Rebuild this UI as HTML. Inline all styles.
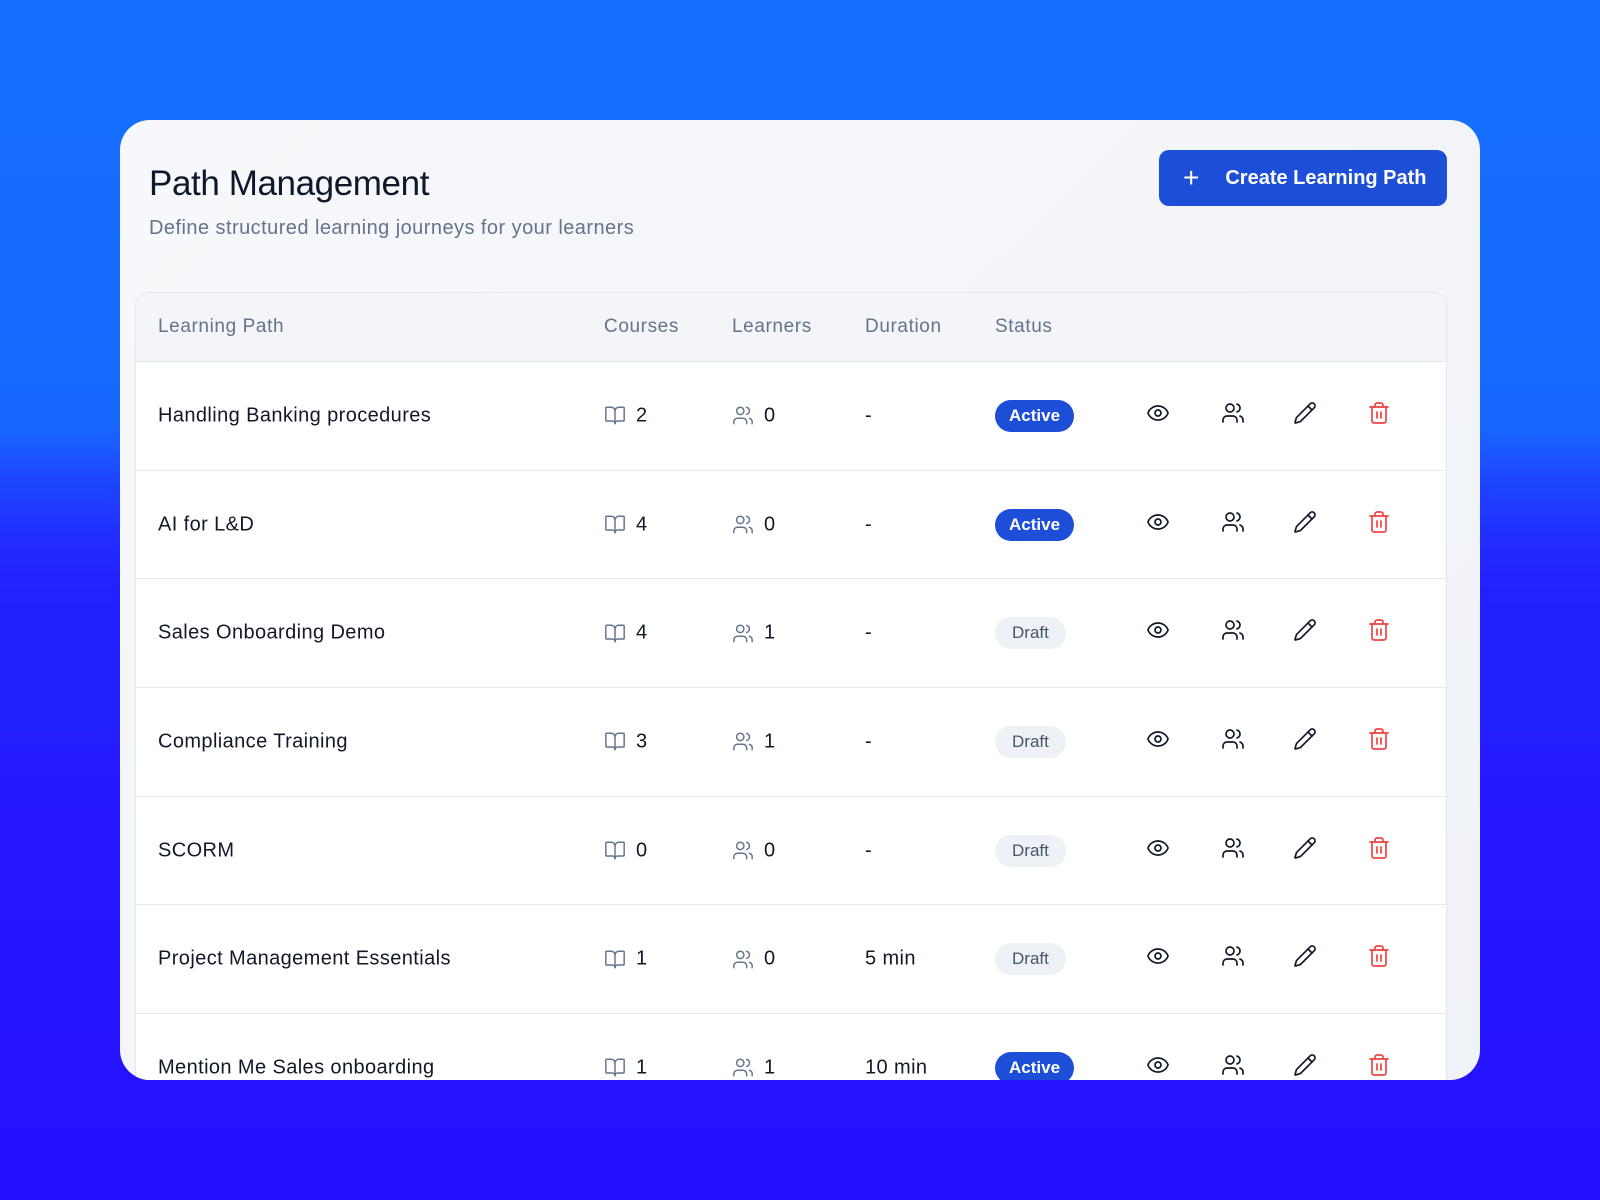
<!DOCTYPE html>
<html><head><meta charset="utf-8"><style>
*{margin:0;padding:0;box-sizing:border-box}
html,body{width:1600px;height:1200px;overflow:hidden}
body{font-family:"Liberation Sans",sans-serif;background:linear-gradient(180deg,#1570ff 0%,#1868ff 35%,#2230ff 50%,#2418ff 65%,#2510ff 100%);position:relative}
.wave{position:absolute;left:0;top:430px;width:1600px;height:300px;background:linear-gradient(180deg,rgba(30,80,255,0) 0%,#2320ff 60%);}
.card{position:absolute;left:120px;top:120px;width:1360px;height:960px;border-radius:30px;background:linear-gradient(135deg,#f7f8fb,#eff2f7);overflow:hidden}
h1{position:absolute;left:29px;top:44px;font-size:35px;font-weight:400;color:#0f172a;letter-spacing:-0.4px}
.sub{position:absolute;left:29px;top:97px;font-size:20px;color:#64748b;letter-spacing:0.45px}
.btn{position:absolute;left:1039px;top:30px;width:288px;height:56px;border-radius:10px;background:#1d4ed8;color:#fff;font-size:20px;font-weight:700;display:flex;align-items:center}
.btn span.p{font-size:28px;font-weight:300;margin-left:24px;margin-right:26px;line-height:1}
.table{position:absolute;left:15px;top:172px;width:1312px;height:900px;border:1px solid #e2e8f0;border-radius:14px;background:#fff;overflow:hidden}
.head{height:69px;background:#f3f5f8;border-bottom:1px solid #e2e8f0;position:relative;font-size:19px;color:#64748b;letter-spacing:0.6px}
.head div,.row>div{position:absolute;top:50%;transform:translateY(-50%)}
.row{height:108.7px;border-bottom:1px solid #e5e9f0;position:relative;font-size:20px;color:#111827;letter-spacing:0.4px}
.c1{left:22px}.c2{left:468px}.c3{left:596px}.c4{left:729px}.c5{left:859px}
.num{display:flex;align-items:center;gap:10px}
.badge{height:32px;border-radius:16px;font-size:17px;line-height:32px;letter-spacing:0}
.act{background:#1d4ed8;color:#fff;font-weight:700;padding:0 14px}
.dr{background:#eef1f5;color:#475569;padding:0 17px}
.ic{width:24px;height:24px;margin-left:-12px}
</style></head><body>
<div class="wave"></div>
<div class="card">
<h1>Path Management</h1>
<div class="sub">Define structured learning journeys for your learners</div>
<div class="btn"><span class="p">+</span>Create Learning Path</div>
<div class="table">
<div class="head"><div class="c1">Learning Path</div><div class="c2">Courses</div><div class="c3">Learners</div><div class="c4">Duration</div><div class="c5">Status</div></div>
</div></div>
<script>
const rows=[["Handling Banking procedures",2,0,"-","Active"],["AI for L&amp;D",4,0,"-","Active"],["Sales Onboarding Demo",4,1,"-","Draft"],["Compliance Training",3,1,"-","Draft"],["SCORM",0,0,"-","Draft"],["Project Management Essentials",1,0,"5 min","Draft"],["Mention Me Sales onboarding",1,1,"10 min","Active"]];
const book='<svg width="22" height="22" viewBox="0 0 24 24" fill="none" stroke="#64748b" stroke-width="1.6" stroke-linecap="round" stroke-linejoin="round"><path d="M12 7v14"/><path d="M3 18a1 1 0 0 1-1-1V4a1 1 0 0 1 1-1h5a4 4 0 0 1 4 4 4 4 0 0 1 4-4h5a1 1 0 0 1 1 1v13a1 1 0 0 1-1 1h-6a3 3 0 0 0-3 3 3 3 0 0 0-3-3z"/></svg>';
const users=(c,w)=>`<svg width="22" height="22" viewBox="0 0 24 24" fill="none" stroke="${c}" stroke-width="${w}" stroke-linecap="round" stroke-linejoin="round"><path d="M16 21v-2a4 4 0 0 0-4-4H6a4 4 0 0 0-4 4v2"/><circle cx="9" cy="7" r="4"/><path d="M22 21v-2a4 4 0 0 0-3-3.87"/><path d="M16 3.13a4 4 0 0 1 0 7.75"/></svg>`;
const eye='<svg class="ic" viewBox="0 0 24 24" fill="none" stroke="#111827" stroke-width="1.7" stroke-linecap="round" stroke-linejoin="round"><path d="M2.06 12.35a1 1 0 0 1 0-.7 10.75 10.75 0 0 1 19.88 0 1 1 0 0 1 0 .7 10.75 10.75 0 0 1-19.88 0"/><circle cx="12" cy="12" r="3"/></svg>';
const pen='<svg class="ic" viewBox="0 0 24 24" fill="none" stroke="#111827" stroke-width="1.7" stroke-linecap="round" stroke-linejoin="round"><path d="M21.17 6.81a1 1 0 0 0-3.98-3.98L3.84 16.17a2 2 0 0 0-.5.83l-1.32 4.35a.5.5 0 0 0 .62.62l4.35-1.32a2 2 0 0 0 .83-.5z"/><path d="m15 5 4 4"/></svg>';
const trash='<svg class="ic" viewBox="0 0 24 24" fill="none" stroke="#ef4444" stroke-width="1.7" stroke-linecap="round" stroke-linejoin="round"><path d="M3 6h18"/><path d="M19 6v14c0 1-1 2-2 2H7c-1 0-2-1-2-2V6"/><path d="M8 6V4c0-1 1-2 2-2h4c1 0 2 1 2 2v2"/><path d="M10 11v6"/><path d="M14 11v6"/></svg>';
let h='';
for(const r of rows){h+=`<div class="row"><div class="c1">${r[0]}</div><div class="c2 num">${book}${r[1]}</div><div class="c3 num">${users('#64748b',1.6)}${r[2]}</div><div class="c4">${r[3]}</div><div class="c5 badge ${r[4]=='Active'?'act':'dr'}">${r[4]}</div><div style="left:1022px">${eye}</div><div style="left:1097px">${users('#111827',1.7).replace('width="22" height="22"','class="ic" width="24" height="24"')}</div><div style="left:1169px">${pen}</div><div style="left:1243px">${trash}</div></div>`;}
document.querySelector('.table').insertAdjacentHTML('beforeend',h);
</script>
</body></html>
